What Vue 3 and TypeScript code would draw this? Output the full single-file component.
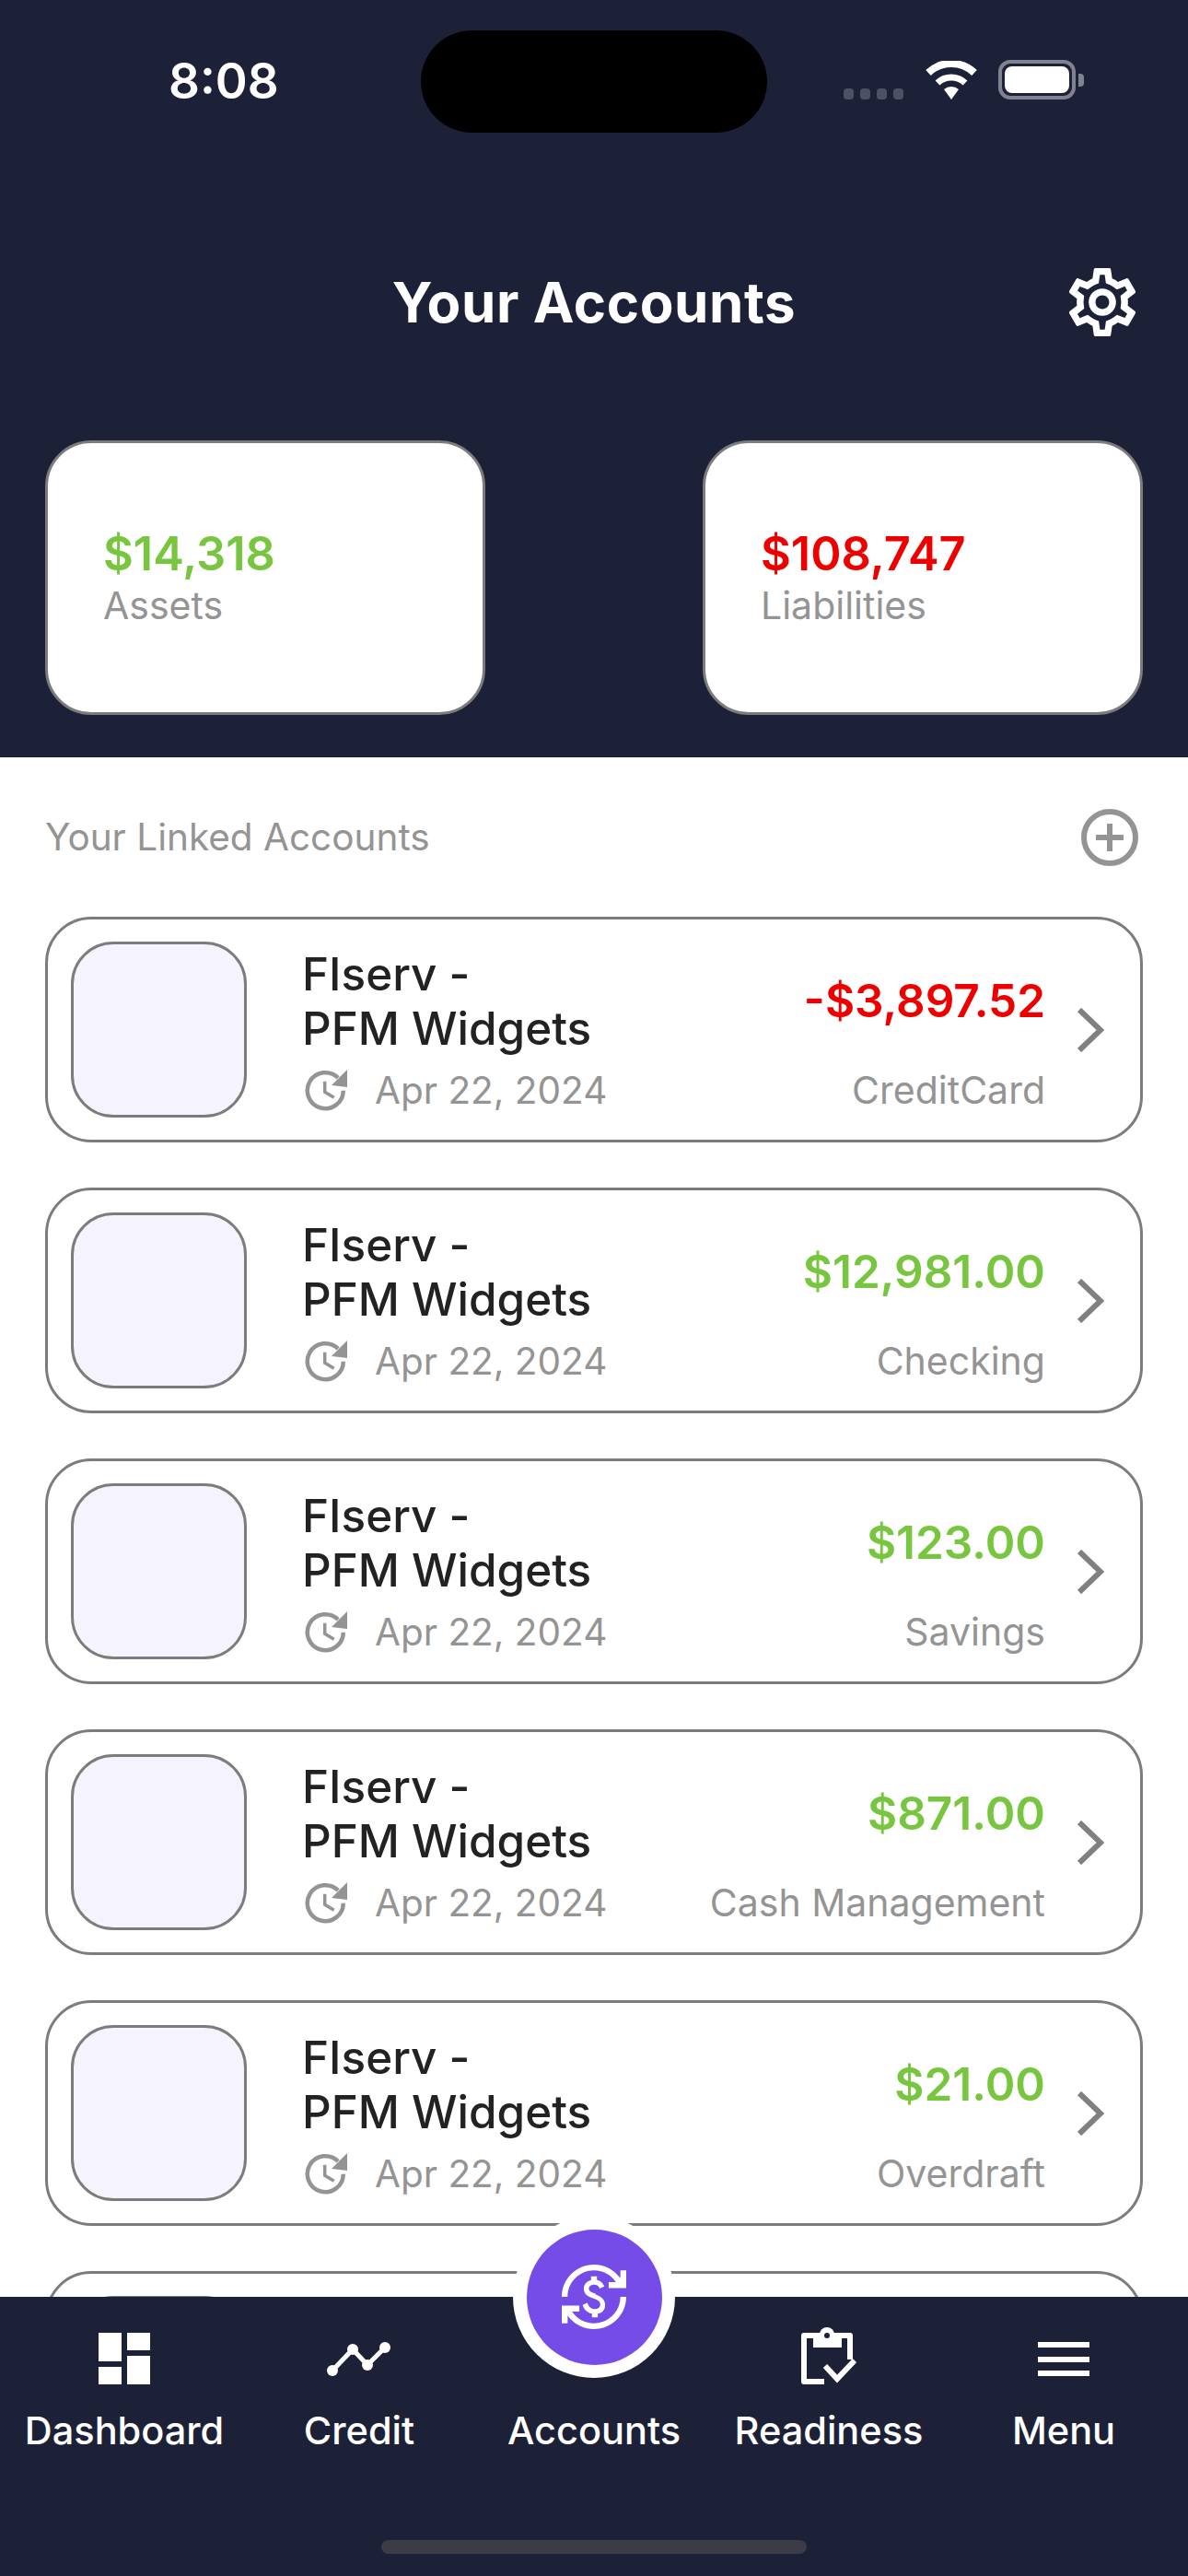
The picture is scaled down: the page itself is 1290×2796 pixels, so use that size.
<script setup lang="ts">
interface Account {
  amount: string
  kind: string
  negative?: boolean
}

const accounts: Account[] = [
  { amount: '-$3,897.52', kind: 'CreditCard', negative: true },
  { amount: '$12,981.00', kind: 'Checking' },
  { amount: '$123.00', kind: 'Savings' },
  { amount: '$871.00', kind: 'Cash Management' },
  { amount: '$21.00', kind: 'Overdraft' },
]
</script>

<template>
  <div class="page">
    <header class="top">
      <div class="status">
        <span class="time">8:08</span>
        <div class="island"></div>
        <div class="status-icons">
          <div class="signal"><i></i><i></i><i></i><i></i></div>
          <svg class="wifi" viewBox="0 0 58 42" width="58" height="42">
            <path d="M29 42 21 31a12 12 0 0 1 16 0Z" fill="#fff" />
            <path d="M14 24a22 22 0 0 1 30 0" fill="none" stroke="#fff" stroke-width="7" />
            <path d="M4 13a36 36 0 0 1 50 0" fill="none" stroke="#fff" stroke-width="8" />
          </svg>
          <div class="battery"><span></span></div>
          <div class="battery-cap"></div>
        </div>
      </div>

      <div class="title-row">
        <h1>Your Accounts</h1>
        <svg class="gear" viewBox="2.3 2 19.4 20" width="72" height="76" fill="#fff">
          <path d="M19.43 12.98c.04-.32.07-.64.07-.98 0-.34-.03-.66-.07-.98l2.11-1.65c.19-.15.24-.42.12-.64l-2-3.46c-.09-.16-.26-.25-.44-.25-.06 0-.12.01-.17.03l-2.49 1c-.52-.4-1.08-.73-1.69-.98l-.38-2.65C14.46 2.18 14.25 2 14 2h-4c-.25 0-.46.18-.49.42l-.38 2.65c-.61.25-1.17.59-1.69.98l-2.49-1c-.06-.02-.12-.03-.18-.03-.17 0-.34.09-.43.25l-2 3.46c-.13.22-.07.49.12.64l2.11 1.65c-.04.32-.07.65-.07.98 0 .33.03.66.07.98l-2.11 1.65c-.19.15-.24.42-.12.64l2 3.46c.09.16.26.25.44.25.06 0 .12-.01.17-.03l2.49-1c.52.4 1.08.73 1.69.98l.38 2.65c.03.24.24.42.49.42h4c.25 0 .46-.18.49-.42l.38-2.65c.61-.25 1.17-.59 1.69-.98l2.49 1c.06.02.12.03.18.03.17 0 .34-.09.43-.25l2-3.46c.12-.22.07-.49-.12-.64l-2.11-1.65zm-1.98-1.71c.04.31.05.52.05.73 0 .21-.02.43-.05.73l-.14 1.13.89.7 1.08.84-.7 1.21-1.27-.51-1.04-.42-.9.68c-.43.32-.84.56-1.25.73l-1.06.43-.16 1.13-.2 1.35h-1.4l-.19-1.35-.16-1.13-1.06-.43c-.43-.18-.83-.41-1.23-.71l-.91-.7-1.06.43-1.27.51-.7-1.21 1.08-.84.89-.7-.14-1.13c-.03-.31-.05-.54-.05-.74s.02-.43.05-.73l.14-1.13-.89-.7-1.08-.84.7-1.21 1.27.51 1.04.42.9-.68c.43-.32.84-.56 1.25-.73l1.06-.43.16-1.13.2-1.35h1.39l.19 1.35.16 1.13 1.06.43c.43.18.83.41 1.23.71l.91.7 1.06-.43 1.27-.51.7 1.21-1.07.85-.89.7.14 1.13zM12 8c-2.21 0-4 1.79-4 4s1.79 4 4 4 4-1.79 4-4-1.79-4-4-4zm0 6c-1.1 0-2-.9-2-2s.9-2 2-2 2 .9 2 2-.9 2-2 2z" />
        </svg>
      </div>

      <div class="summary">
        <div class="summary-card">
          <div class="summary-value green">$14,318</div>
          <div class="summary-label">Assets</div>
        </div>
        <div class="summary-card">
          <div class="summary-value red">$108,747</div>
          <div class="summary-label">Liabilities</div>
        </div>
      </div>
    </header>

    <main class="content">
      <div class="section-head">
        <span>Your Linked Accounts</span>
        <svg viewBox="0 0 62 62" width="62" height="62" fill="none" stroke="#949494" stroke-width="6">
          <circle cx="31" cy="31" r="28" />
          <path d="M31 16v30M16 31h30" />
        </svg>
      </div>

      <div class="list">
        <div v-for="(a, i) in accounts" :key="i" class="account">
          <div class="logo"></div>
          <div class="info">
            <div class="name">FIserv -<br />PFM Widgets</div>
            <div class="updated">
              <svg class="clock" viewBox="0 0 48 46" width="48" height="46" fill="none" stroke="#949494">
                <path d="M41.8 23.7A19.5 19.5 0 1 1 36.1 9.9" stroke-width="4.5" />
                <path d="M46 1v19l-17-2Z" fill="#949494" stroke="none" />
                <path d="M21.7 13.7v11.6l10 6" stroke-width="3.5" />
              </svg>
              <span>Apr 22, 2024</span>
            </div>
          </div>
          <div class="money">
            <div class="amount" :class="a.negative ? 'red' : 'green'">{{ a.amount }}</div>
            <div class="kind">{{ a.kind }}</div>
          </div>
          <svg class="chevron" viewBox="0 0 30 48" width="30" height="48" fill="none" stroke="#808080" stroke-width="6">
            <path d="M3 2 26 24 3 46" />
          </svg>
        </div>
        <!-- sixth row runs under the tab bar, only its top edge shows -->
        <div class="account">
          <div class="logo"></div>
        </div>
      </div>
    </main>

    <nav class="tabs">
      <div class="fab">
        <div class="fab-inner">
          <svg viewBox="1 1 22 22" width="70" height="70" fill="#fff">
            <path d="M12.89 11.1c-1.78-.59-2.64-.96-2.64-1.9 0-1.02 1.11-1.39 1.81-1.39 1.31 0 1.79.99 1.9 1.34l1.58-.67c-.15-.45-.82-1.92-2.54-2.24V5h-2v1.26c-2.48.56-2.49 2.86-2.49 2.96 0 2.27 2.25 2.91 3.35 3.31 1.58.56 2.28 1.07 2.28 2.03 0 1.13-1.05 1.61-1.98 1.61-1.82 0-2.34-1.87-2.4-2.09l-1.66.67c.63 2.19 2.28 2.78 3.2 3V19h2v-1.24c.65-.11 2.49-.6 2.49-2.93.01-1.24-.54-2.87-3.41-3.73zM3 21H1v-6h6v2H4.52c1.61 2.41 4.36 4 7.48 4 4.97 0 9-4.03 9-9h2c0 6.08-4.92 11-11 11-3.72 0-7.01-1.85-9-4.67V21zm-2-9C1 5.92 5.92 1 12 1c3.72 0 7.01 1.85 9 4.67V3h2v6h-6V7h2.48C17.87 4.59 15.12 3 12 3c-4.97 0-9 4.03-9 9H1z" />
          </svg>
        </div>
      </div>

      <div class="tab">
        <div class="tab-icon">
          <svg viewBox="0 0 56 56" width="56" height="56" fill="#fff">
            <rect x="0" y="0" width="25" height="31" />
            <rect x="0" y="37" width="25" height="19" />
            <rect x="31" y="0" width="25" height="19" />
            <rect x="31" y="25" width="25" height="31" />
          </svg>
        </div>
        <span>Dashboard</span>
      </div>
      <div class="tab">
        <div class="tab-icon">
          <svg class="credit" viewBox="0 0 70 38" width="70" height="38" fill="#fff">
            <path d="M6 31 28 8l16 17L63 6" fill="none" stroke="#fff" stroke-width="5" />
            <circle cx="6" cy="31" r="6" />
            <circle cx="28" cy="8" r="6" />
            <circle cx="44" cy="25" r="6" />
            <circle cx="63" cy="6" r="6" />
          </svg>
        </div>
        <span>Credit</span>
      </div>
      <div class="tab">
        <div class="tab-icon"></div>
        <span>Accounts</span>
      </div>
      <div class="tab">
        <div class="tab-icon">
          <svg viewBox="0 0 60 62" width="60" height="62" fill="none" stroke="#fff" stroke-width="6">
            <path d="M25 59H3V9h50v26" stroke-linejoin="round" />
            <path d="M13 9h31v13H13z" fill="#fff" stroke="none" />
            <circle cx="28" cy="8" r="8" fill="#fff" stroke="none" />
            <circle cx="28" cy="9" r="3" fill="#1d2138" stroke="none" />
            <path d="M26 42l13 14 19-20" />
          </svg>
        </div>
        <span>Readiness</span>
      </div>
      <div class="tab">
        <div class="tab-icon">
          <div class="burger"><i></i><i></i><i></i></div>
        </div>
        <span>Menu</span>
      </div>

      <div class="home-bar"></div>
    </nav>
  </div>
</template>

<style>
html,
body {
  margin: 0;
  background: #fff;
}
</style>

<style scoped>
.page {
  width: 1290px;
  height: 2796px;
  display: flex;
  flex-direction: column;
  overflow: hidden;
  font-family: Inter, 'Liberation Sans', sans-serif;
  background: #fff;
}

.top {
  height: 822px;
  flex: none;
  background: #1d2138;
  box-sizing: border-box;
  padding: 33px 49px 0;
  color: #fff;
}

.status {
  height: 111px;
  display: grid;
  grid-template-columns: 408px 376px 1fr;
  align-items: center;
}

.time {
  font-size: 53px;
  font-weight: 600;
  padding-left: 134px;
  margin-top: -2px;
}

.island {
  height: 111px;
  background: #000;
  border-radius: 56px;
}

.status-icons {
  display: flex;
  align-items: flex-end;
  height: 43px;
  margin: -4px 0 0 83px;
}

.signal {
  display: flex;
  gap: 7px;
  margin-right: 23px;
}

.signal i {
  width: 11px;
  height: 12px;
  background: #4e5163;
  border-radius: 4px;
}

.wifi {
  margin-right: 22px;
}

.battery {
  width: 84px;
  height: 43px;
  box-sizing: border-box;
  border: 4px solid #80838f;
  border-radius: 13px;
  padding: 3px;
}

.battery span {
  display: block;
  height: 100%;
  background: #fff;
  border-radius: 8px;
}

.battery-cap {
  width: 6px;
  height: 14px;
  margin: 0 0 14px 3px;
  background: #80838f;
  border-radius: 0 4px 4px 0;
}

.title-row {
  position: relative;
  height: 76px;
  margin-top: 146px;
  display: flex;
  align-items: center;
  justify-content: center;
}

.title-row h1 {
  margin: 0;
  font-size: 60px;
  font-weight: 700;
  letter-spacing: 0.6px;
}

.gear {
  position: absolute;
  right: 8px;
  top: 0;
}

.summary {
  display: flex;
  justify-content: space-between;
  margin-top: 112px;
}

.summary-card {
  width: 478px;
  height: 298px;
  box-sizing: border-box;
  background: #fff;
  border: 3px solid #7c7c7c;
  border-radius: 50px;
  padding: 0 60px;
  display: flex;
  flex-direction: column;
  justify-content: center;
}

.summary-value {
  font-size: 50.5px;
  font-weight: 600;
  line-height: 60px;
}

.summary-label {
  font-size: 41px;
  line-height: 52px;
  color: #949494;
}

.green {
  color: #78c63f;
}

.red {
  color: #ef0000;
}

.content {
  flex: 1;
  min-height: 0;
  overflow: hidden;
  padding: 0 49px;
}

.section-head {
  height: 173px;
  display: flex;
  align-items: center;
  justify-content: space-between;
  padding-right: 5px;
  font-size: 40.5px;
  color: #949494;
}

.list {
  display: flex;
  flex-direction: column;
  gap: 49px;
}

.account {
  height: 245px;
  flex: none;
  box-sizing: border-box;
  border: 3px solid #7c7c7c;
  border-radius: 50px;
  padding: 0 39px 0 25px;
  display: flex;
  align-items: center;
}

.logo {
  width: 191px;
  height: 191px;
  flex: none;
  box-sizing: border-box;
  background: #f5f3fd;
  border: 3px solid #7c7c7c;
  border-radius: 46px;
}

.info {
  margin-left: 60px;
  flex: 1;
}

.name {
  font-size: 49.4px;
  font-weight: 550;
  line-height: 59px;
  color: #222;
}

.updated {
  display: flex;
  align-items: center;
  gap: 28px;
  font-size: 40.5px;
  color: #949494;
  margin-top: 13px;
}

.clock {
  margin-left: 3px;
  flex: none;
}

.money {
  text-align: right;
  margin: 28px 34px 0 0;
}

.amount {
  font-size: 49.5px;
  font-weight: 600;
  line-height: 60px;
}

.kind {
  font-size: 41px;
  line-height: 50px;
  color: #949494;
  margin-top: 42px;
}

.chevron {
  flex: none;
}

.tabs {
  position: relative;
  height: 303px;
  flex: none;
  box-sizing: border-box;
  background: #1d2138;
  padding: 33px 7.5px 0;
  display: grid;
  grid-template-columns: repeat(5, 1fr);
  align-items: start;
  color: #fff;
}

.tab {
  display: flex;
  flex-direction: column;
  align-items: center;
  font-size: 41.5px;
  font-weight: 550;
}

.tab-icon {
  height: 62px;
  display: flex;
  align-items: flex-end;
  margin-bottom: 25px;
}

.credit {
  margin-bottom: 8px;
}

.burger {
  width: 56px;
  height: 37px;
  margin-bottom: 9px;
  display: flex;
  flex-direction: column;
  justify-content: space-between;
}

.burger i {
  display: block;
  height: 6px;
  background: #fff;
}

.fab {
  position: absolute;
  left: 557px;
  top: -88px;
  width: 176px;
  height: 176px;
  border-radius: 50%;
  background: #fff;
  display: flex;
  align-items: center;
  justify-content: center;
}

.fab-inner {
  width: 147px;
  height: 147px;
  border-radius: 50%;
  background: #764ce8;
  display: flex;
  align-items: center;
  justify-content: center;
}

.home-bar {
  position: absolute;
  left: 414px;
  bottom: 24px;
  width: 462px;
  height: 15px;
  border-radius: 8px;
  background: #3b3c48;
}
</style>
